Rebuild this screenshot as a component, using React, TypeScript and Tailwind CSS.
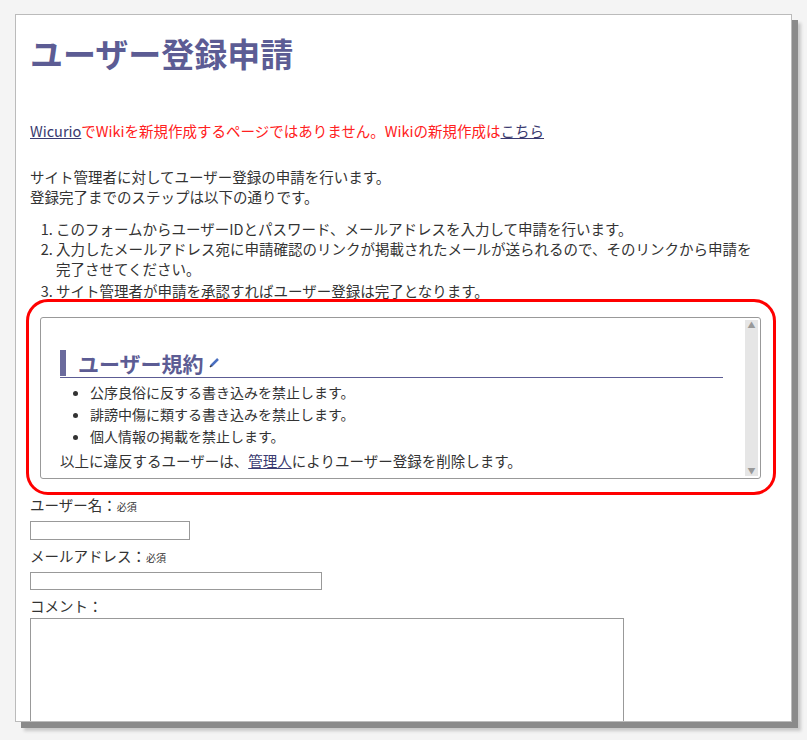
import React from 'react';

const font = { fontFamily: '"Noto Sans CJK JP", "Noto Sans", sans-serif' };

const App = () => {
    return (
        <div className="w-[807px] h-[740px] bg-[#f4f4f4] pt-[14px] pl-[15px] overflow-hidden" style={font}>
            <div className="w-[777px] h-[708px] bg-white border border-[#bbb] shadow-[6px_6px_0_#8a8a8a,9px_9px_3px_#c8c8c8] pl-[14px] pt-[16px] text-[14.5px] text-[#333] leading-[20px] overflow-hidden">
                <h1 className="text-[33px] font-bold text-[#5c5c94] leading-[44px]">ユーザー登録申請</h1>
                <p className="mt-[46px] text-[#ff2020]">
                    <span className="underline text-[#3a3a70]">Wicurio</span>でWikiを新規作成するページではありません。Wikiの新規作成は<span className="underline text-[#3a3a70]">こちら</span>
                </p>
                <p className="mt-[26px]">サイト管理者に対してユーザー登録の申請を行います。<br />登録完了までのステップは以下の通りです。</p>
                <ol className="list-decimal pl-[26px] mt-[12px] w-[730px]">
                    <li>このフォームからユーザーIDとパスワード、メールアドレスを入力して申請を行います。</li>
                    <li>入力したメールアドレス宛に申請確認のリンクが掲載されたメールが送られるので、そのリンクから申請を完了させてください。</li>
                    <li className="mt-[2px]">サイト管理者が申請を承認すればユーザー登録は完了となります。</li>
                </ol>
                <div className="relative mt-[16px] ml-[10px] w-[721px]">
                    <div className="absolute -left-[14px] -top-[18px] w-[750px] h-[196px] border-[3px] border-[#ff0000] rounded-[22px] pointer-events-none" />
                    <div className="h-[162px] border border-[#999] rounded-[3px] flex">
                        <div className="flex-1 pl-[19px] pt-[32px]">
                            <div className="flex items-end border-b border-[#5c5c94] w-[663px] pb-[1px]">
                                <span className="w-[6px] h-[26px] bg-[#6a6a9c] mr-[12px]" />
                                <span className="text-[21px] font-bold text-[#5c5c94] leading-[26px]">ユーザー規約</span>
                                <svg width="12" height="12" viewBox="0 0 12 12" className="ml-[5px] mb-[8px]">
                                    <path d="M2 10 L9 3" stroke="#4a6fc0" strokeWidth="2.5" />
                                    <path d="M1 11 L2.5 9.5" stroke="#333" strokeWidth="1.5" />
                                </svg>
                            </div>
                            <ul className="list-disc pl-[30px] mt-[3px] text-[14px] leading-[22px]">
                                <li>公序良俗に反する書き込みを禁止します。</li>
                                <li>誹謗中傷に類する書き込みを禁止します。</li>
                                <li>個人情報の掲載を禁止します。</li>
                            </ul>
                            <p className="mt-[4px]">以上に違反するユーザーは、<span className="underline text-[#3a3a70]">管理人</span>によりユーザー登録を削除します。</p>
                        </div>
                        <div className="w-[13px] mr-[2px] my-[2px] bg-[#e6e6e6] flex flex-col justify-between items-center text-[8px] text-[#999] leading-[10px]">
                            <span>▲</span><span>▼</span>
                        </div>
                    </div>
                </div>
                <div className="mt-[16px]">ユーザー名：<span className="text-[10px]">必須</span></div>
                <input className="mt-[4px] block w-[160px] h-[19px] border border-[#999]" />
                <div className="mt-[6px]">メールアドレス：<span className="text-[10px]">必須</span></div>
                <input className="mt-[4px] block w-[292px] h-[18px] border border-[#999]" />
                <div className="mt-[6px]">コメント：</div>
                <textarea className="mt-[2px] block w-[594px] h-[140px] border border-[#999]" />
            </div>
        </div>
    );
};

export default App;
